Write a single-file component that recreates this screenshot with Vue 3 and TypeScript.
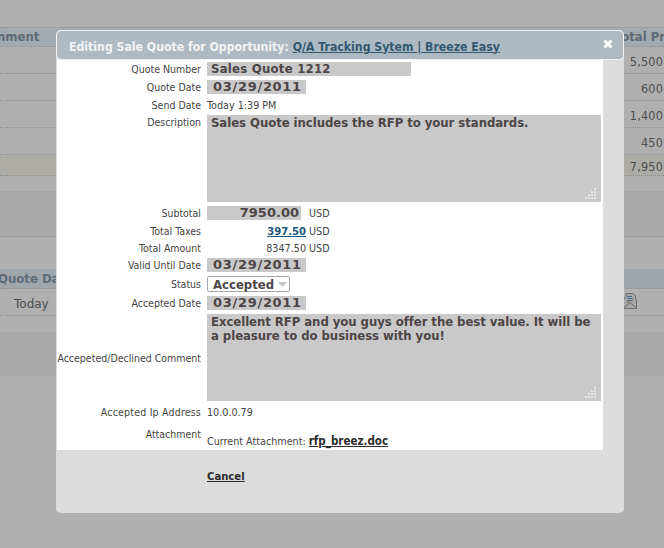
<script setup lang="ts">
const rows = ['5,500', '600', '1,400', '450']
</script>

<template>
  <div class="page">
    <div class="bg">
      <div class="thead"><span>nment</span><span>otal Price</span></div>
      <div v-for="r in rows" :key="r" class="trow"><span>{{ r }}</span></div>
      <div class="trow total"><span>7,950</span></div>
      <div class="band first"></div>
      <div class="thead second"><span>Quote Date</span></div>
      <div class="trow today">
        <span>Today</span>
        <svg class="mail" width="14" height="16" viewBox="0 0 14 16">
          <path d="M0.5 6.5 L3 3.5 V0.5 H10 L12.5 3 V6 L13.5 7 V15.5 H0.5 Z" fill="#a8a8a8" stroke="#666d68" />
          <path d="M0.5 15 L7 9.5 L13.5 15" fill="none" stroke="#666d68" />
          <path d="M4 3.5 H9 M4 5.5 H10 M4 7.5 H10" stroke="#4f6c8c" />
          <path d="M3 9 H7" stroke="#8a7b4f" />
        </svg>
      </div>
      <div class="band second-band"></div>
    </div>

    <div class="modal">
      <div class="head">
        <span class="title">Editing Sale Quote for Opportunity: <a>Q/A Tracking Sytem | Breeze Easy</a></span>
        <svg class="close" width="10" height="10" viewBox="0 0 10 10"><path d="M1.5 1.5 L8.5 8.5 M8.5 1.5 L1.5 8.5" stroke="#fff" stroke-width="3" /></svg>
      </div>
      <div class="form">
        <div class="row h14"><label>Quote Number</label><div class="field w204">Sales Quote 1212</div></div>
        <div class="row h14"><label>Quote Date</label><div class="field date">03/29/2011</div></div>
        <div class="row h14 tight"><label>Send Date</label><span class="val">Today 1:39 PM</span></div>
        <div class="row area-row top">
          <label>Description</label>
          <div class="area">
            Sales Quote includes the RFP to your standards.
            <svg class="grip" width="12" height="12" viewBox="0 0 12 12"><path d="M9 1h2v2H9zM6 4h2v2H6zM9 4h2v2H9zM3 7h2v2H3zM6 7h2v2H6zM9 7h2v2H9zM0 10h2v2H0zM3 10h2v2H3zM6 10h2v2H6zM9 10h2v2H9z" fill="#eee" opacity=".8" /></svg>
          </div>
        </div>
        <div class="row h14"><label>Subtotal</label><div class="field money">7950.00</div><span class="cur spaced">USD</span></div>
        <div class="row h14 tight"><label>Total Taxes</label><a class="tax">397.50</a><span class="cur">USD</span></div>
        <div class="row h14 tight"><label>Total Amount</label><span class="amount">8347.50</span><span class="cur">USD</span></div>
        <div class="row h14"><label>Valid Until Date</label><div class="field date">03/29/2011</div></div>
        <div class="row h16">
          <label>Status</label>
          <div class="select">Accepted<svg width="9" height="5" viewBox="0 0 9 5"><path d="M0 0h9L4.5 5z" fill="#c4c4c4" /></svg></div>
        </div>
        <div class="row h14"><label>Accepted Date</label><div class="field date">03/29/2011</div></div>
        <div class="row area-row">
          <label>Accepeted/Declined Comment</label>
          <div class="area">
            Excellent RFP and you guys offer the best value. It will be a pleasure to do business with you!
            <svg class="grip" width="12" height="12" viewBox="0 0 12 12"><path d="M9 1h2v2H9zM6 4h2v2H6zM9 4h2v2H9zM3 7h2v2H3zM6 7h2v2H6zM9 7h2v2H9zM0 10h2v2H0zM3 10h2v2H3zM6 10h2v2H6zM9 10h2v2H9z" fill="#eee" opacity=".8" /></svg>
          </div>
        </div>
        <div class="row h14"><label class="wide">Accepted Ip Address</label><span class="val">10.0.0.79</span></div>
        <div class="row attach">
          <label>Attachment</label>
          <span class="val">Current Attachment: <a class="file">rfp_breez.doc</a></span>
        </div>
      </div>
      <div class="foot"><a class="cancel">Cancel</a></div>
    </div>
  </div>
</template>

<style>
html, body { margin: 0; background: #b0b0b0; }
</style>

<style scoped>
.page {
  position: relative;
  width: 664px;
  height: 548px;
  overflow: hidden;
  background: #b0b0b0;
  font-family: "DejaVu Sans", sans-serif;
}
.bg {
  padding-top: 27px;
  color: #4e4e4e;
  font-size: 12px;
}
.thead {
  display: flex;
  justify-content: space-between;
  align-items: center;
  height: 20px;
  box-sizing: border-box;
  background: #a3aaaf;
  border-top: 1px dotted #8e8e8e;
  border-bottom: 1px dotted #8e8e8e;
  font-family: "DejaVu Sans Condensed", sans-serif;
  font-weight: bold;
  font-size: 13px;
  color: #5d6b78;
  padding-bottom: 1px;
  white-space: nowrap;
}
.thead span:first-child { margin-left: -3px; }
.thead span:last-child:not(:first-child) { margin-right: -20px; }
.thead.second { background: #a0a7ac; border-top: 0; margin-top: 32px; padding-bottom: 0; }
.thead.second span:first-child { margin-left: -2px; }
.trow {
  display: flex;
  justify-content: flex-end;
  align-items: center;
  height: 27px;
  box-sizing: border-box;
  border-bottom: 1px dotted #8e8e8e;
  padding: 2px 1px 0 0;
  font-family: "DejaVu Sans Condensed", sans-serif;
  font-size: 12.5px;
  letter-spacing: 0.2px;
}
.trow.total {
  height: 21px;
  background: #acaba6;
}
.band { background: #a8a8a8; }
.band.first {
  height: 45px;
  margin-top: 15px;
  border-bottom: 1px solid #999;
}
.trow.today {
  position: relative;
  justify-content: flex-start;
  padding: 3px 0 0 14px;
  height: 27px;
  font-family: "DejaVu Sans", sans-serif;
  font-size: 12px;
  letter-spacing: 0;
}
.mail { position: absolute; left: 623px; top: 4px; }
.band.second-band { height: 44px; margin-top: 16px; }

.modal {
  position: absolute;
  left: 56px;
  top: 30px;
  width: 568px;
  height: 483px;
  box-sizing: border-box;
  padding: 1px;
  background: #dcdcdc;
  border-radius: 5px;
  font-family: "DejaVu Sans Condensed", "DejaVu Sans", sans-serif;
  font-size: 10.5px;
  color: #444;
}
.head {
  position: absolute;
  left: 0;
  top: 0;
  right: 0;
  height: 30px;
  box-sizing: border-box;
  background: #aebac3;
  border: 1px solid #f0f2f4;
  border-radius: 5px;
  display: flex;
  align-items: center;
  padding: 3px 10px 0 12px;
  font-family: "DejaVu Sans Condensed", sans-serif;
  font-weight: bold;
  font-size: 12.2px;
  color: #f0f3f5;
}
.head a { color: #35586f; text-decoration: underline; }
.title { flex: 1; white-space: nowrap; }
.close { margin-top: -6px; }
.form {
  margin-top: 28px;
  width: 546px;
  height: 391px;
  box-sizing: border-box;
  background: #fff;
  padding-top: 3px;
  display: flex;
  flex-direction: column;
  gap: 4px;
}
.row {
  display: flex;
  align-items: center;
}
.row.tight { margin-bottom: -1px; }
.row label {
  width: 144px;
  margin-right: 6px;
  flex: none;
  text-align: right;
  white-space: nowrap;
}
.row label.wide { letter-spacing: 0.2px; }
.h14 { height: 14px; }
.h16 { height: 16px; }
.area-row { height: 87px; }
.area-row.top { align-items: flex-start; }
.area-row.top label { line-height: 15px; }
.attach { height: 27px; align-items: flex-start; }
.attach label { margin-top: 5px; }
.attach .val { margin-top: 11px; font-size: 10.7px; }
.field, .area, .select, .tax, .file, .cancel {
  font-family: "DejaVu Sans Condensed", sans-serif;
  font-weight: bold;
}
.field {
  background: #c9c9c9;
  height: 14px;
  line-height: 14px;
  font-size: 13px;
  color: #4c4646;
  box-sizing: border-box;
  padding-left: 4px;
  white-space: nowrap;
}
.w204 { width: 204px; letter-spacing: 0.25px; }
.date, .money { font-family: "DejaVu Sans", sans-serif; }
.date { width: 99px; padding-left: 6px; letter-spacing: 0.7px; }
.money { width: 94px; text-align: right; padding-right: 2px; margin-right: 8px; }
.area {
  position: relative;
  width: 394px;
  height: 87px;
  box-sizing: border-box;
  background: #c9c9c9;
  padding: 1px 4px 0;
  font-size: 13px;
  line-height: 14px;
  color: #4c4646;
  letter-spacing: -0.05px;
}
.grip { position: absolute; right: 4px; bottom: 3px; }
.val { font-size: 10.7px; }
.tax {
  width: 99px;
  text-align: right;
  color: #1d5680;
  text-decoration: underline;
  font-size: 11.2px;
}
.cur { margin-left: 3px; font-size: 10.7px; }
.cur.spaced { margin-left: 0; }
.amount { width: 99px; text-align: right; font-size: 10.7px; }
.select {
  display: flex;
  align-items: center;
  width: 83px;
  height: 16px;
  box-sizing: border-box;
  padding-left: 5px;
  border: 1px solid #a6a6a6;
  border-radius: 2px;
  font-size: 13px;
  color: #4c4646;
  gap: 4px;
}
.file { color: #2c2c2c; text-decoration: underline; font-size: 11.5px; }
.foot { padding: 20px 0 0 150px; }
.cancel { color: #2c2c2c; text-decoration: underline; font-size: 11.2px; }
</style>
